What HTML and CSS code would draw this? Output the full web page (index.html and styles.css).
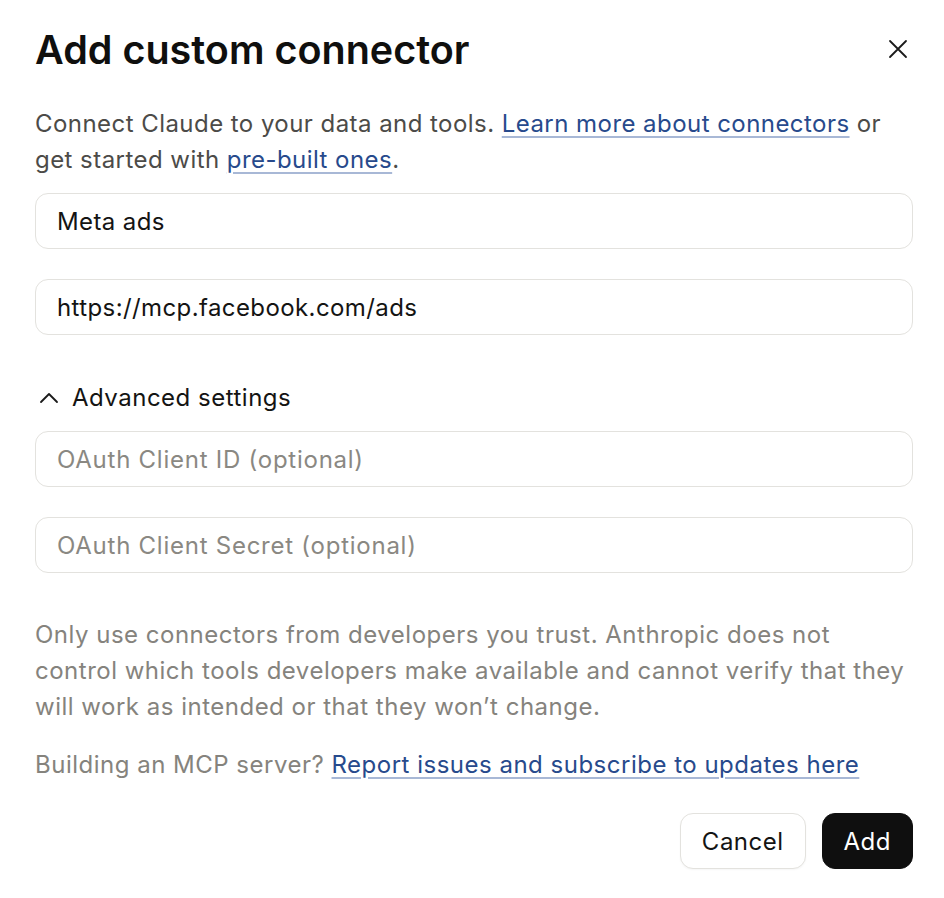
FILE: index.html
```html
<!DOCTYPE html>
<html lang="en">
<head>
<meta charset="utf-8">
<title>Add custom connector</title>
<link rel="stylesheet" href="styles.css">
</head>
<body>
<div class="dialog">
  <div class="header">
    <h1 class="title">Add custom connector</h1>
    <button class="close" aria-label="Close">
      <svg width="20" height="20" viewBox="0 0 20 20" fill="none" stroke="#1a1a1a" stroke-width="1.8" stroke-linecap="round"><path d="M2 2L18 18M18 2L2 18"/></svg>
    </button>
  </div>
  <p class="intro">Connect Claude to your data and tools. <a href="#" class="link">Learn more about connectors</a> or get started with <a href="#" class="link">pre-built ones</a>.</p>
  <div class="fields">
    <input class="field" type="text" value="Meta ads">
    <input class="field" type="text" value="https://mcp.facebook.com/ads">
  </div>
  <button class="advanced">
    <svg width="20" height="12" viewBox="0 0 20 12" fill="none" stroke="#1a1a1a" stroke-width="1.8" stroke-linecap="round" stroke-linejoin="round"><path d="M2 10L10 2L18 10"/></svg>
    <span>Advanced settings</span>
  </button>
  <div class="fields">
    <input class="field placeholder-field" type="text" placeholder="OAuth Client ID (optional)">
    <input class="field placeholder-field" type="text" placeholder="OAuth Client Secret (optional)">
  </div>
  <p class="note">Only use connectors from developers you trust. Anthropic does not control which tools developers make available and cannot verify that they will work as intended or that they won’t change.</p>
  <p class="note build">Building an MCP server? <a href="#" class="link">Report issues and subscribe to updates here</a></p>
  <div class="actions">
    <button class="btn btn-secondary">Cancel</button>
    <button class="btn btn-primary">Add</button>
  </div>
</div>
</body>
</html>
```

FILE: styles.css
```css
* { box-sizing: border-box; }
html, body {
  margin: 0;
  background: #ffffff;
}
body {
  font-family: Inter, "Noto Sans", "Liberation Sans", sans-serif;
  color: #141413;
  letter-spacing: 0.5px;
}
.dialog {
  padding: 26px 31px 30px 35px;
  display: flex;
  flex-direction: column;
}
.header {
  display: flex;
  justify-content: space-between;
  align-items: center;
}
.title {
  margin: 0;
  font-size: 39.5px;
  font-weight: 600;
  line-height: 48px;
  letter-spacing: 0;
  color: #0f0f0e;
}
.close {
  border: 0;
  background: none;
  padding: 0;
  width: 24px;
  height: 24px;
  display: flex;
  align-items: center;
  justify-content: center;
  margin-right: 3px;
  margin-top: -2px;
}
.intro {
  margin: 32px 0 0;
  font-size: 24px;
  line-height: 36px;
  letter-spacing: 0.45px;
  color: #4c4b48;
}
.link {
  color: #274a8c;
  text-decoration: underline;
  text-decoration-color: #a8b8d6;
  text-decoration-thickness: 2px;
  text-underline-offset: 4px;
}
.fields {
  display: flex;
  flex-direction: column;
  gap: 30px;
  margin-top: 15px;
}
.field {
  width: 100%;
  height: 56px;
  border: 1.5px solid #e3e2de;
  border-radius: 13px;
  padding: 0 21px;
  font-family: inherit;
  font-size: 24px;
  letter-spacing: 0.4px;
  color: #141413;
  background: #fff;
  outline: none;
}
.placeholder-field {
  letter-spacing: 0.75px;
}
.field::placeholder {
  color: #8a8882;
}
.advanced {
  margin-top: 45px;
  margin-bottom: 0;
  padding: 0 0 0 4px;
  border: 0;
  background: none;
  display: flex;
  align-items: center;
  gap: 13px;
  font-family: inherit;
  font-size: 24px;
  line-height: 36px;
  letter-spacing: 0.5px;
  color: #141413;
  align-self: flex-start;
}
.note {
  margin: 44px 0 0;
  font-size: 24px;
  line-height: 36px;
  color: #85837d;
}
.build {
  margin-top: 22px;
}
.actions {
  display: flex;
  justify-content: flex-end;
  gap: 16px;
  margin-top: 30px;
}
.btn {
  height: 56px;
  border-radius: 13px;
  font-family: inherit;
  font-size: 24px;
  letter-spacing: 0.5px;
  padding: 0 21px;
}
.btn-secondary {
  background: #fff;
  border: 1.5px solid #e3e2de;
  color: #141413;
  box-shadow: 0 1px 2px rgba(0,0,0,0.04);
}
.btn-primary {
  background: #0f0f0f;
  border: 1.5px solid #0f0f0f;
  color: #fff;
}
```
